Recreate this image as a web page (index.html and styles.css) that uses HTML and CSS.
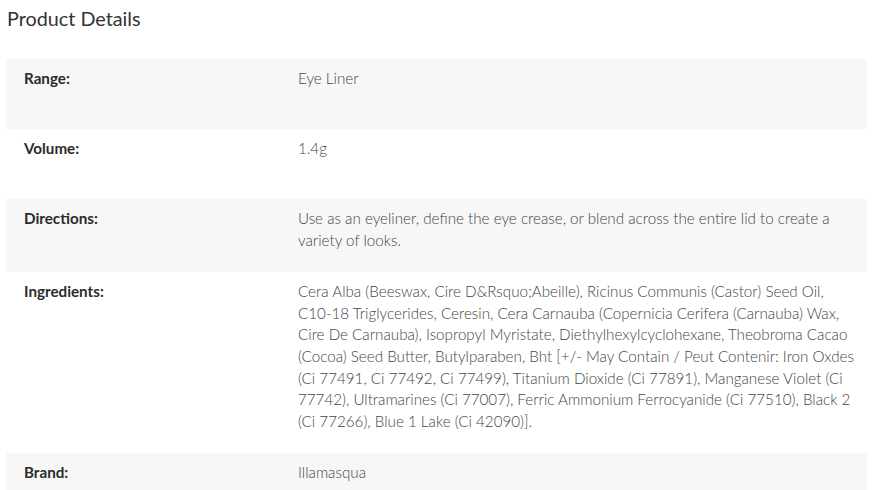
FILE: index.html
```html
<!DOCTYPE html>
<html lang="en">
<head>
<meta charset="utf-8">
<title>Product Details</title>
<link rel="stylesheet" href="styles.css">
</head>
<body>
<section class="details">
  <h2 class="details-title">Product Details</h2>
  <div class="details-table">
    <div class="row">
      <div class="label">Range:</div>
      <div class="value">Eye Liner</div>
    </div>
    <div class="row">
      <div class="label">Volume:</div>
      <div class="value">1.4g</div>
    </div>
    <div class="row">
      <div class="label">Directions:</div>
      <div class="value">Use as an eyeliner, define the eye crease, or blend across the entire lid to create a variety of looks.</div>
    </div>
    <div class="row">
      <div class="label">Ingredients:</div>
      <div class="value">Cera Alba (Beeswax, Cire D&amp;Rsquo;Abeille), Ricinus Communis (Castor) Seed Oil, C10-18 Triglycerides, Ceresin, Cera Carnauba (Copernicia Cerifera (Carnauba) Wax, Cire De Carnauba), Isopropyl Myristate, Diethylhexylcyclohexane, Theobroma Cacao (Cocoa) Seed Butter, Butylparaben, Bht [+/- May Contain / Peut Contenir: Iron Oxdes (Ci 77491, Ci 77492, Ci 77499), Titanium Dioxide (Ci 77891), Manganese Violet (Ci 77742), Ultramarines (Ci 77007), Ferric Ammonium Ferrocyanide (Ci 77510), Black 2 (Ci 77266), Blue 1 Lake (Ci 42090)].</div>
    </div>
    <div class="row">
      <div class="label">Brand:</div>
      <div class="value">Illamasqua</div>
    </div>
  </div>
</section>
</body>
</html>
```

FILE: styles.css
```css
html, body {
  margin: 0;
  padding: 0;
  background: #ffffff;
}

body {
  font-family: Lato, "Open Sans", sans-serif;
  color: #333333;
  padding: 6px 14px 0 6px;
}

.details-title {
  margin: 0 0 29px 1px;
  font-size: 19.8px;
  line-height: 24px;
  font-weight: 400;
  color: #333333;
}

.details-table {
  display: flex;
  flex-direction: column;
}

.row {
  display: grid;
  grid-template-columns: 274px 1fr;
  min-height: 70px;
  box-sizing: border-box;
}

.row:nth-child(odd) {
  background: #f7f7f7;
}

.label,
.value {
  padding: 9px 18px 21px 18px;
  font-size: 15.2px;
  line-height: 21.6px;
}

.label {
  font-weight: 700;
  color: #2b2b2b;
}

.value {
  font-weight: 300;
  color: #444444;
  padding-right: 10px;
}
```
